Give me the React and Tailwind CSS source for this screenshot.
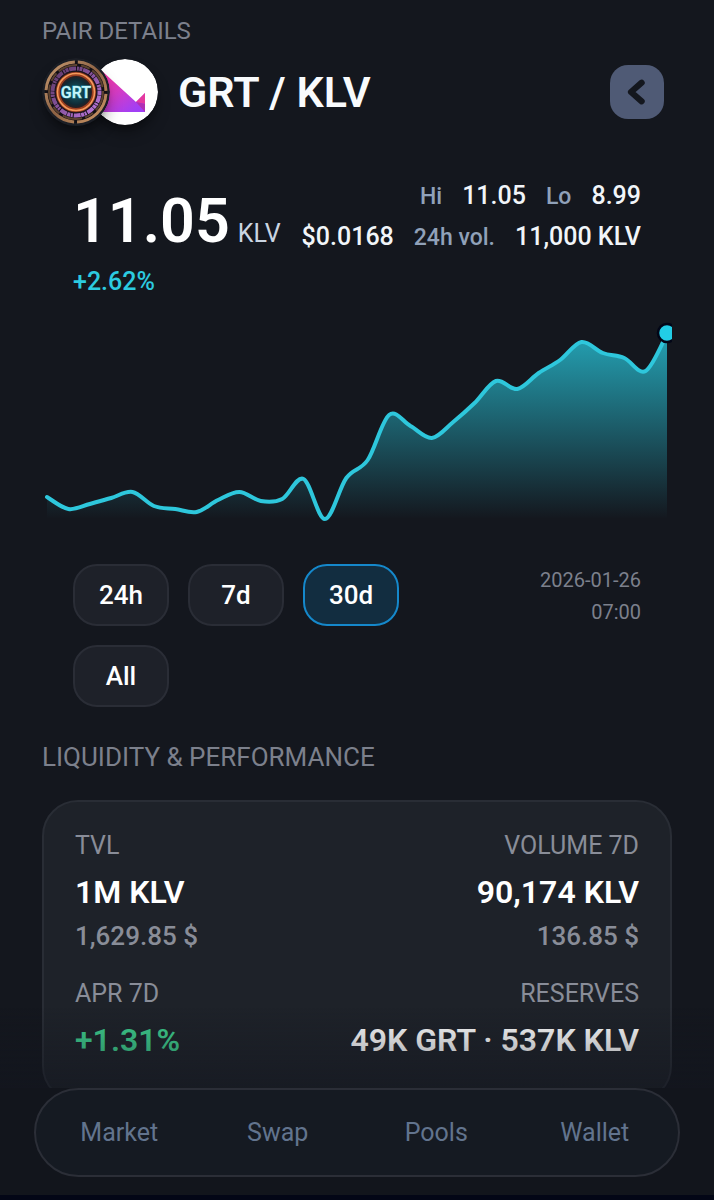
import React from 'react';

const points = [
    497, 509, 504, 498, 492, 506, 509, 512, 500, 492, 501, 499, 479, 519, 478,
    460, 415, 426, 438, 422, 403, 381, 389, 373, 360, 342, 353, 358, 371, 334,
].map((y, i) => [5 + (i * 620) / 29, y - 320]);

const linePath = points.reduce((d, [x, y], i) => {
    if (i === 0) return `M${x} ${y}`;
    const before = points[i - 2] || points[i - 1];
    const prev = points[i - 1];
    const next = points[i + 1] || [x, y];
    const c1 = [prev[0] + (x - before[0]) / 6, prev[1] + (y - before[1]) / 6];
    const c2 = [x - (next[0] - prev[0]) / 6, y - (next[1] - prev[1]) / 6];
    return `${d}C${c1[0]} ${c1[1]} ${c2[0]} ${c2[1]} ${x} ${y}`;
}, '');

const ranges = ['24h', '7d', '30d', 'All'];
const navItems = ['Market', 'Swap', 'Pools', 'Wallet'];

const GrtLogo = () => (
    <svg viewBox="0 0 68 68" className="relative z-10 size-[68px] rounded-full shadow-lg shadow-black/40" role="img" aria-label="GRT">
        <defs>
            <linearGradient id="grtRim" x1="0" y1="0" x2="1" y2="1">
                <stop offset="0" stopColor="#c79a70" />
                <stop offset="0.5" stopColor="#8d6244" />
                <stop offset="1" stopColor="#d19a68" />
            </linearGradient>
            <linearGradient id="grtPurple" x1="0" y1="0" x2="1" y2="1">
                <stop offset="0" stopColor="#5b3866" />
                <stop offset="0.5" stopColor="#8a55a0" />
                <stop offset="1" stopColor="#c07ae0" />
            </linearGradient>
            <radialGradient id="grtCore">
                <stop offset="0" stopColor="#17606c" />
                <stop offset="0.7" stopColor="#0f2a35" />
                <stop offset="1" stopColor="#3a1714" />
            </radialGradient>
        </defs>
        <circle cx="34" cy="34" r="34" fill="#1b1e25" />
        <circle cx="34" cy="34" r="31" fill="#120f14" />
        <circle cx="34" cy="34" r="30" fill="none" stroke="url(#grtRim)" strokeWidth="3" strokeDasharray="44 3" strokeDashoffset="-2" />
        <circle cx="34" cy="34" r="27" fill="none" stroke="#5c4230" strokeWidth="2" strokeDasharray="20 4 9 3" />
        <circle cx="34" cy="34" r="23.5" fill="none" stroke="url(#grtPurple)" strokeWidth="4" strokeDasharray="3 0.6 7 1 2 0.6" />
        <circle cx="34" cy="34" r="21" fill="#241820" />
        <circle cx="34" cy="34" r="18" fill="url(#grtCore)" stroke="#9a3f20" strokeWidth="4" />
        <circle cx="34" cy="34" r="18.5" fill="none" stroke="#f39a5c" strokeWidth="1.6" />
        <text x="34" y="40" textAnchor="middle" fill="#c5f4fa" stroke="#2b8fa3" strokeWidth="1" paintOrder="stroke" fontFamily="Roboto, sans-serif" fontSize="16" fontWeight="600">GRT</text>
    </svg>
);

const KlvLogo = () => (
    <svg viewBox="0 0 66 66" className="-ml-[18px] size-[66px] rounded-full shadow-lg shadow-black/40" role="img" aria-label="KLV">
        <defs>
            <linearGradient id="klvFill" x1="0" y1="0" x2="0.7" y2="1">
                <stop offset="0" stopColor="#f4369c" />
                <stop offset="0.5" stopColor="#d63cc4" />
                <stop offset="1" stopColor="#a13ff5" />
            </linearGradient>
        </defs>
        <circle cx="33" cy="33" r="33" fill="#fff" />
        <path d="M10 12L44 43L53 34V53H10Z" fill="url(#klvFill)" />
        <path d="M44 43L53 34V45Z" fill="#e5399f" />
        <path d="M44 43L53 45V53Z" fill="#b12fb4" />
    </svg>
);

const Stat = ({ label, value, sub, right, valueClass = 'text-white' }) => (
    <div className={right ? 'text-right' : ''}>
        <p className="text-[25px] leading-8 text-[#898d98]">{label}</p>
        <p className={`mt-2 text-[32px] leading-[44px] font-semibold whitespace-nowrap ${valueClass}`}>{value}</p>
        {sub && <p className="mt-1 text-[26px] leading-9 font-medium text-[#898d98]">{sub}</p>}
    </div>
);

const App = () => {
    return (
        <div className="min-h-screen bg-[#14171e] px-[42px] pt-4 pb-24 font-[Roboto,sans-serif] text-white">
            <header>
                <p className="text-2xl leading-[30px] text-[#7c808c]">PAIR DETAILS</p>
                <div className="mt-3 flex items-center justify-between pr-2">
                    <div className="flex items-center">
                        <GrtLogo />
                        <KlvLogo />
                        <h1 className="ml-5 text-[43px] leading-[54px] font-semibold text-slate-50">GRT / KLV</h1>
                    </div>
                    <button type="button" aria-label="Back" className="flex size-[54px] items-center justify-center rounded-[18px] bg-[#4f5a75]">
                        <svg viewBox="0 0 24 24" className="size-8" fill="none" stroke="#14171e" strokeWidth="4.6" strokeLinecap="round" strokeLinejoin="round">
                            <path d="M15.5 5L7.5 12L15.5 19" />
                        </svg>
                    </button>
                </div>
            </header>

            <section className="mt-[50px]">
                <div className="flex justify-between px-[31px]">
                    <div>
                        <div className="flex items-baseline gap-2 pt-2">
                            <span className="text-[61px] leading-[74px] font-semibold">11.05</span>
                            <span className="text-[25px] text-slate-300">KLV</span>
                        </div>
                        <p className="mt-2 text-[25px] leading-8 font-medium text-[#2ccbe0]">+2.62%</p>
                    </div>
                    <div className="flex flex-col items-end text-[25px] leading-10 font-medium whitespace-nowrap text-slate-100">
                        <div className="flex items-baseline gap-5">
                            <span className="text-[23px] text-slate-400">Hi</span>
                            <span>11.05</span>
                            <span className="text-[23px] text-slate-400">Lo</span>
                            <span>8.99</span>
                        </div>
                        <div className="flex items-baseline gap-5">
                            <span>$0.0168</span>
                            <span className="text-[23px] text-slate-400">24h vol.</span>
                            <span>11,000 KLV</span>
                        </div>
                    </div>
                </div>

                <svg viewBox="0 0 630 204" className="mt-[22px] w-full" role="img" aria-label="Price chart">
                    <defs>
                        <linearGradient id="area" x1="0" y1="0" x2="0" y2="1">
                            <stop offset="0" stopColor="#28c4d9" stopOpacity="0.8" />
                            <stop offset="1" stopColor="#28c4d9" stopOpacity="0" />
                        </linearGradient>
                    </defs>
                    <path d={`${linePath}L625 198L5 198Z`} fill="url(#area)" />
                    <path d={linePath} fill="none" stroke="#2ec7dc" strokeWidth="4" strokeLinecap="round" strokeLinejoin="round" />
                    <circle cx="625" cy="13" r="9" fill="#22cde6" stroke="#020617" strokeWidth="2.5" />
                </svg>
            </section>

            <div className="mt-10 flex items-start justify-between px-[31px]">
                <div className="flex max-w-[340px] flex-wrap gap-[19px]">
                    {ranges.map((range) => (
                        <button
                            key={range}
                            type="button"
                            aria-pressed={range === '30d'}
                            className={`h-[62px] w-24 rounded-3xl border-2 text-[26px] font-medium ${
                                range === '30d' ? 'border-[#1588cb] bg-[#122d40]' : 'border-[#2a2d36] bg-[#1e2129]'
                            }`}
                        >
                            {range}
                        </button>
                    ))}
                </div>
                <time dateTime="2026-01-26T07:00" className="w-28 text-right text-xl leading-8 text-[#7c808c]">
                    2026-01-26 07:00
                </time>
            </div>

            <h2 className="mt-9 text-[26px] leading-7 text-[#7c808c]">LIQUIDITY &amp; PERFORMANCE</h2>

            <section className="mt-[29px] h-[302px] rounded-[36px] border-2 border-[#292d35] bg-[#1e2229] px-[31px] pt-7">
                <div className="flex justify-between">
                    <Stat label="TVL" value="1M KLV" sub="1,629.85 $" />
                    <Stat label="VOLUME 7D" value="90,174 KLV" sub="136.85 $" right />
                </div>
                <div className="mt-6 flex justify-between">
                    <Stat label="APR 7D" value="+1.31%" valueClass="text-[#3ecf8e]" />
                    <Stat label="RESERVES" value="49K GRT · 537K KLV" right />
                </div>
            </section>

            <div className="fixed inset-x-0 bottom-0 z-20 border-b-[5px] border-[#030616]">
                <div className="h-20 bg-linear-to-b from-[#12151e]/0 to-[#12151e]/50"></div>
                <div className="bg-[#12151c] px-[34px] pb-[18px]">
                    <nav className="flex h-[89px] items-center justify-around rounded-full border-2 border-[#2b2e37] bg-[#151a22] px-1 text-[25px] text-slate-500">
                        {navItems.map((item) => (
                            <a key={item} href="#" className="flex-1 text-center">{item}</a>
                        ))}
                    </nav>
                </div>
            </div>
        </div>
    );
};

export default App;
